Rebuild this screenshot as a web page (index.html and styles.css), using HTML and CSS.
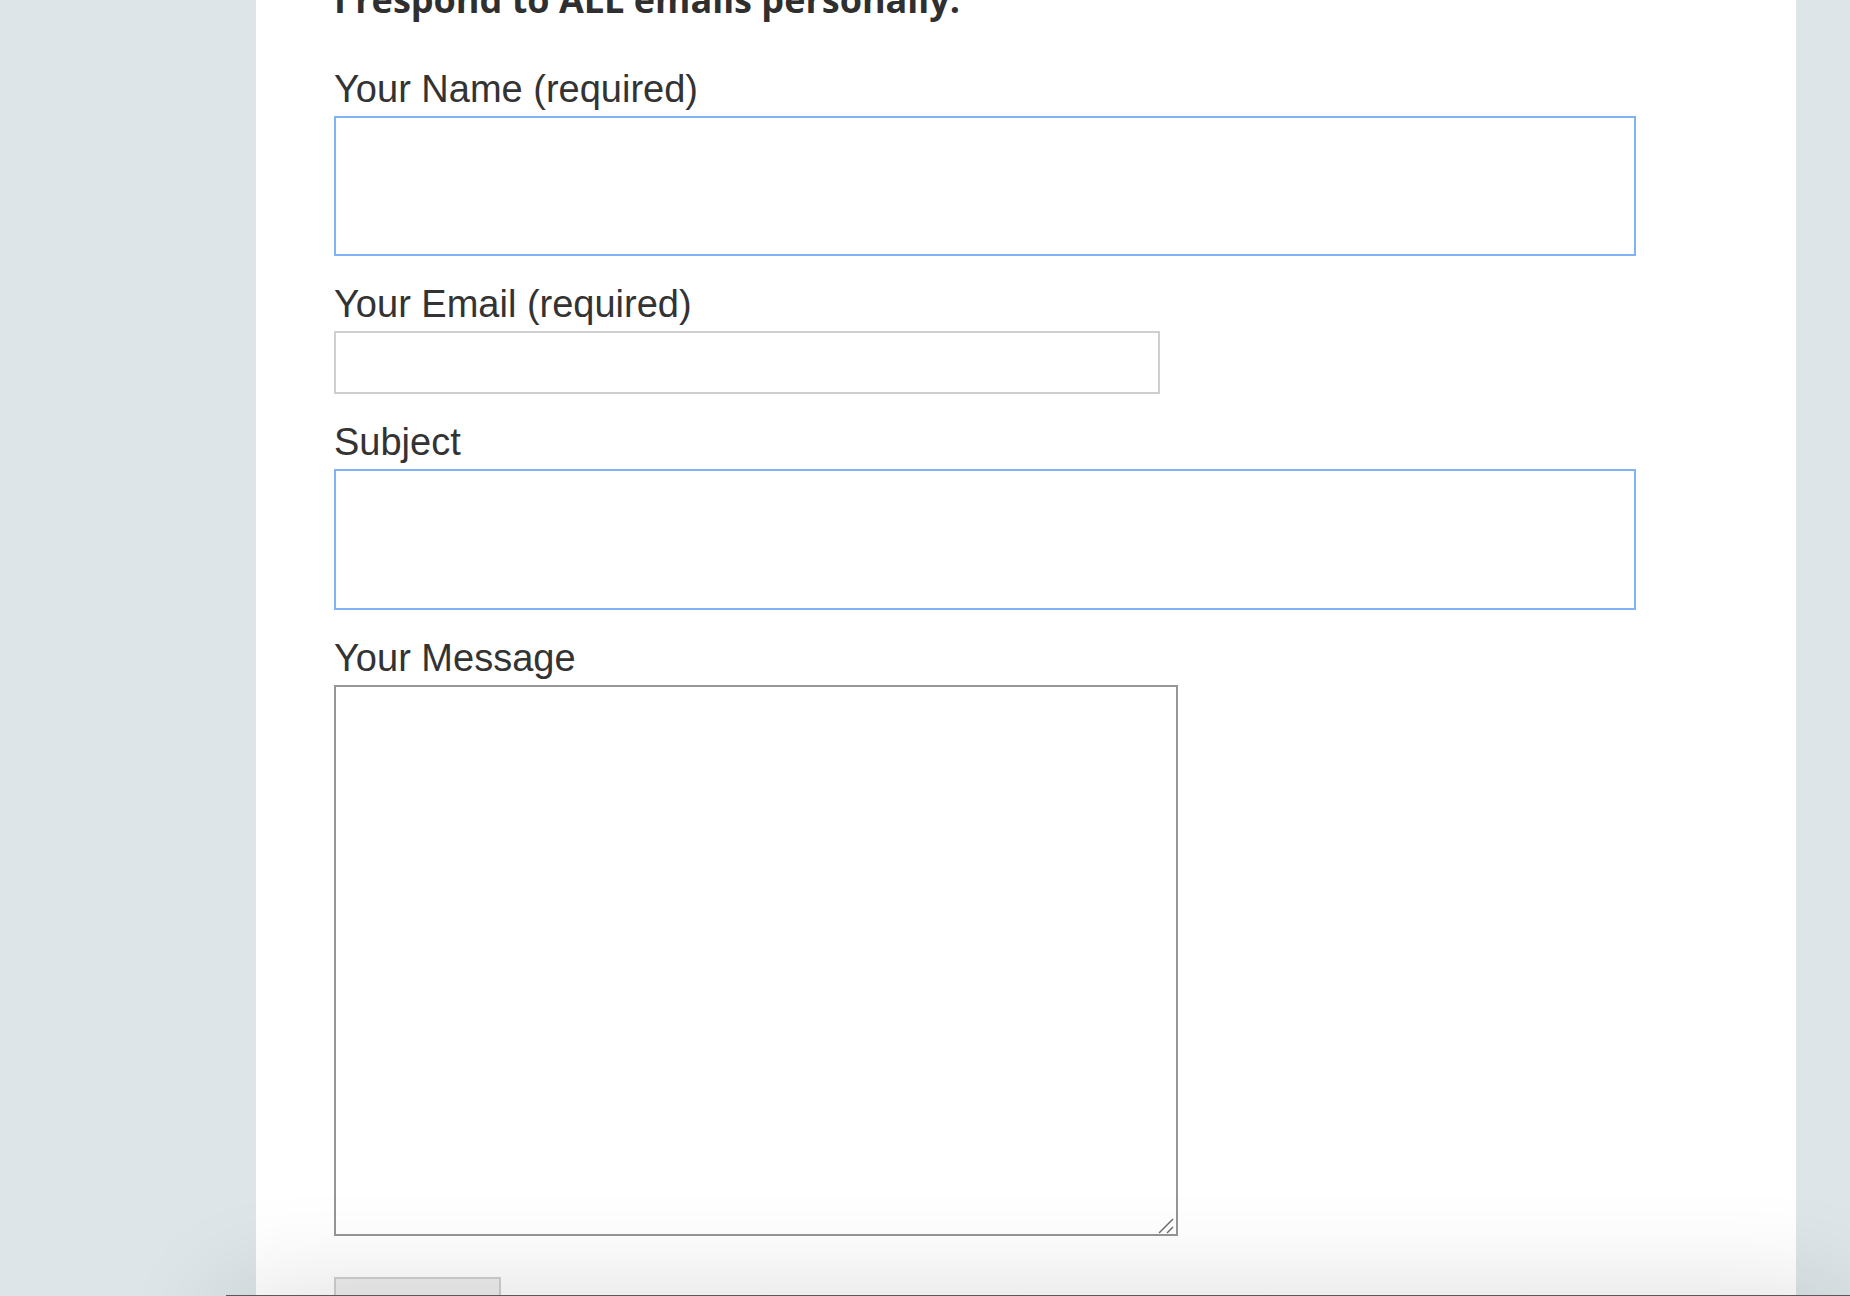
FILE: index.html
```html
<!DOCTYPE html>
<html lang="en">
<head>
<meta charset="utf-8">
<title>Contact</title>
<link rel="stylesheet" href="styles.css">
</head>
<body>
<div class="page">
  <main class="panel">
    <h2 class="intro">I respond to ALL emails personally.</h2>
    <form class="contact-form">
      <div class="field field-first">
        <label class="field-label" for="name">Your Name (required)</label>
        <input class="input input-focus input-tall" id="name" type="text">
      </div>
      <div class="field">
        <label class="field-label" for="email">Your Email (required)</label>
        <input class="input input-plain input-email" id="email" type="email">
      </div>
      <div class="field">
        <label class="field-label" for="subject">Subject</label>
        <input class="input input-focus input-subject" id="subject" type="text">
      </div>
      <div class="field">
        <label class="field-label" for="message">Your Message</label>
        <div class="message-wrap">
          <textarea class="message" id="message"></textarea>
          <svg class="resizer" width="18" height="18" viewBox="0 0 18 18" aria-hidden="true">
            <line x1="1" y1="17" x2="15" y2="3" stroke="#6b6b6b" stroke-width="1.5"/>
            <line x1="9" y1="17" x2="15" y2="11" stroke="#6b6b6b" stroke-width="1.5"/>
          </svg>
        </div>
      </div>
      <button class="send" type="button">Send</button>
    </form>
  </main>
  <div class="bottom-bar"></div>
</div>
</body>
</html>
```

FILE: styles.css
```css
html, body {
  margin: 0;
  padding: 0;
}

body {
  background: #dde5e8;
  font-family: "Liberation Sans", Arial, sans-serif;
  color: #333333;
}

.page {
  position: relative;
  height: 1296px;
  overflow: hidden;
}

.panel {
  display: flow-root;
  margin-left: 256px;
  width: 1540px;
  height: 1400px;
  background: #ffffff;
  box-sizing: border-box;
  padding-left: 78px;
}

.intro {
  margin: -22px 0 0 0;
  font-family: "Open Sans", "Liberation Sans", sans-serif;
  font-weight: 700;
  font-size: 36px;
  line-height: 44px;
  color: #2f2f2f;
}

.contact-form {
  display: flex;
  flex-direction: column;
  align-items: flex-start;
}

.field {
  display: flex;
  flex-direction: column;
  align-items: flex-start;
  margin-top: 26px;
}

.field-first {
  margin-top: 45px;
}

.field-label {
  display: block;
  font-size: 38px;
  line-height: 44px;
  color: #333333;
}

.input {
  display: block;
  box-sizing: border-box;
  margin: 5px 0 0 0;
  padding: 0 10px;
  background: #ffffff;
  outline: none;
  font: inherit;
}

.input-focus {
  border: 2px solid #80b2f6;
  width: 1302px;
}

.input-tall {
  height: 140px;
}

.input-subject {
  height: 141px;
}

.input-plain {
  border: 2px solid #cfcfcf;
}

.input-email {
  width: 826px;
  height: 63px;
}

.message-wrap {
  position: relative;
  margin-top: 5px;
}

.message {
  display: block;
  box-sizing: border-box;
  margin: 0;
  width: 844px;
  height: 551px;
  border: 2px solid #969696;
  background: #ffffff;
  outline: none;
  resize: none;
  font: inherit;
}

.resizer {
  position: absolute;
  right: 2px;
  bottom: 2px;
}

.send {
  margin-top: 41px;
  width: 167px;
  height: 60px;
  box-sizing: border-box;
  border: 2px solid #d0d0d0;
  background: #efefef;
  color: #333333;
  font-family: "Liberation Sans", Arial, sans-serif;
  font-size: 22px;
  padding-top: 30px;
}

.bottom-bar {
  position: absolute;
  left: 226px;
  right: 0;
  top: 1295px;
  height: 120px;
  background: #f0f0f0;
  border-top: 1px solid #5a5a5a;
  box-shadow: 0 0 110px rgba(0, 0, 0, 0.14);
}
```
